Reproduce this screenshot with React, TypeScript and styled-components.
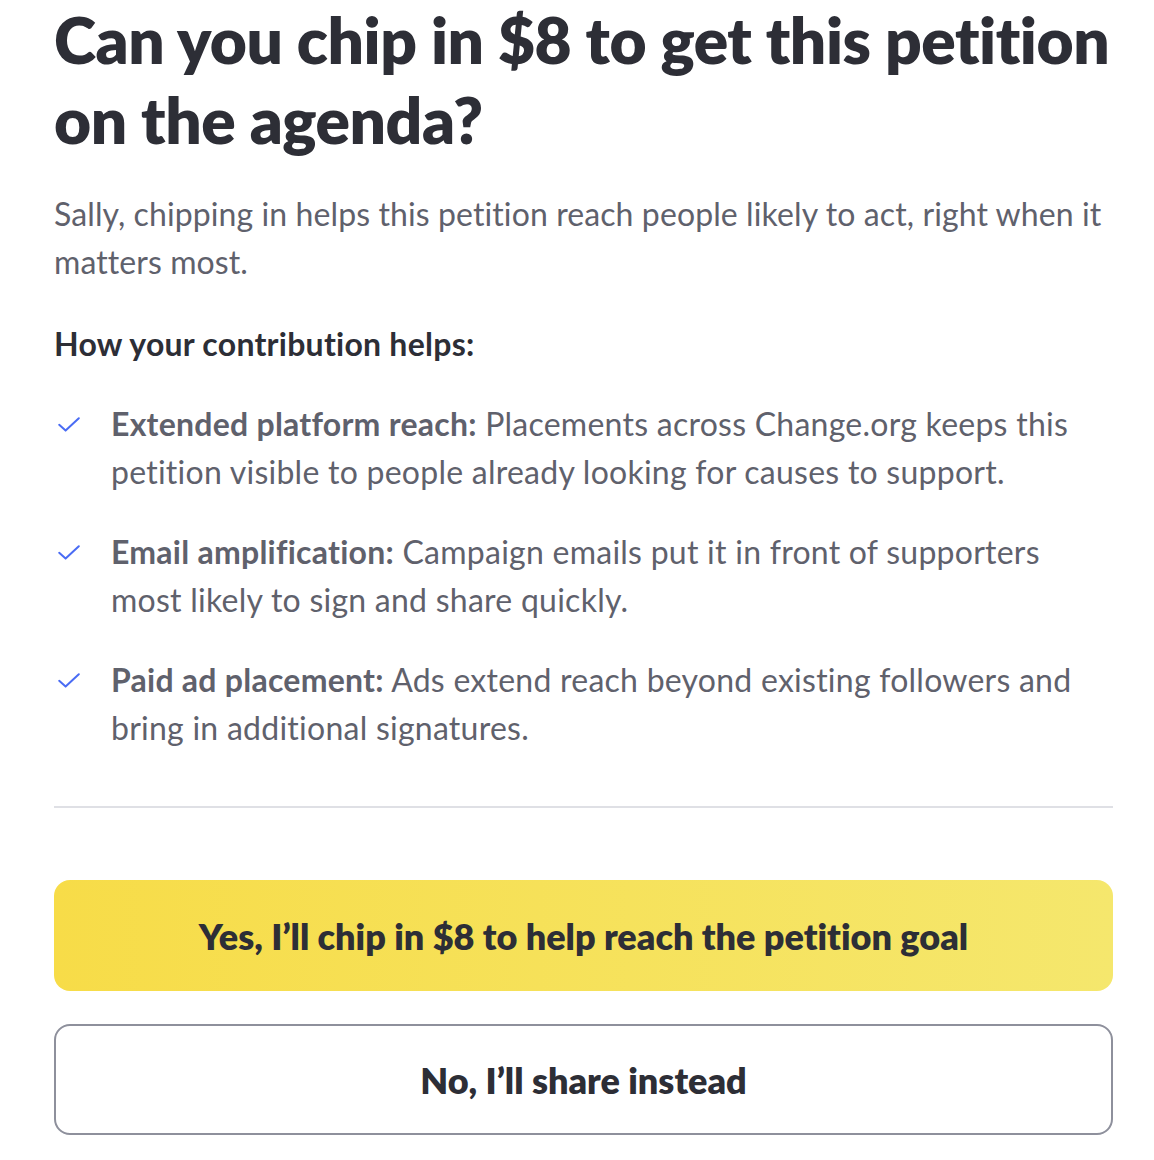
import React from "react";
import styled, { createGlobalStyle } from "styled-components";

const GlobalStyle = createGlobalStyle`
  html, body {
    margin: 0;
    padding: 0;
    background: #ffffff;
  }
  body {
    font-family: Lato, "Open Sans", sans-serif;
    font-variant-ligatures: none;
    -webkit-font-smoothing: antialiased;
  }
`;

const Page = styled.div`
  width: 1059px;
  padding: 0 41px 0 54px;
  display: flex;
  flex-direction: column;
`;

const Heading = styled.h1`
  margin: 0;
  font-size: 64px;
  line-height: 80px;
  font-weight: 800;
  color: #2d2e36;
  letter-spacing: -0.45px;
`;

const Intro = styled.p`
  margin: 30px 0 0;
  font-size: 32px;
  line-height: 48px;
  letter-spacing: 0.1px;
  color: #5f616c;
`;

const SubHeading = styled.h2`
  margin: 34px 0 0;
  font-size: 32px;
  line-height: 48px;
  letter-spacing: 0.25px;
  font-weight: 700;
  color: #2d2e36;
`;

const List = styled.ul`
  list-style: none;
  margin: 32px 0 0;
  padding: 0;
  display: flex;
  flex-direction: column;
  gap: 32px;
`;

const Item = styled.li`
  display: flex;
  align-items: flex-start;
  gap: 31px;
  font-size: 32px;
  line-height: 48px;
  letter-spacing: 0.25px;
  color: #5f616c;
`;

const CheckBox = styled.span`
  flex: 0 0 26px;
  height: 48px;
  display: flex;
  align-items: center;
  justify-content: flex-end;
`;

const Strong = styled.strong`
  font-weight: 700;
`;

const Divider = styled.hr`
  margin: 54px 0 0;
  border: none;
  height: 2px;
  background: #dfe0e5;
`;

const Actions = styled.div`
  margin-top: 72px;
  display: flex;
  flex-direction: column;
  gap: 33px;
`;

const ActionButton = styled.button<{ $primary?: boolean }>`
  height: 111px;
  border-radius: 16px;
  font-family: Lato, "Open Sans", sans-serif;
  font-variant-ligatures: none;
  font-size: 36px;
  font-weight: 800;
  color: #2d2e36;
  cursor: pointer;
  background: ${(p) =>
    p.$primary ? "linear-gradient(90deg, #f7dc48 0%, #f5e76d 100%)" : "#ffffff"};
  border: ${(p) => (p.$primary ? "none" : "2px solid #8e909c")};
  padding: 0 24px;
`;

const Check = () => (
  <svg width="22" height="15" viewBox="0 0 22 15" fill="none">
    <path
      d="M1.2 7.8 L7.6 13.6 L20.8 1.2"
      stroke="#4a6cf4"
      strokeWidth="2"
      strokeLinecap="round"
      strokeLinejoin="round"
    />
  </svg>
);

const points = [
  {
    title: "Extended platform reach:",
    text: "Placements across Change.org keeps this petition visible to people already looking for causes to support.",
  },
  {
    title: "Email amplification:",
    text: "Campaign emails put it in front of supporters most likely to sign and share quickly.",
  },
  {
    title: "Paid ad placement:",
    text: "Ads extend reach beyond existing followers and bring in additional signatures.",
  },
];

export default function App() {
  return (
    <>
      <GlobalStyle />
      <Page>
        <Heading>Can you chip in $8 to get this petition on the agenda?</Heading>
        <Intro>
          Sally, chipping in helps this petition reach people likely to act,
          right when it matters most.
        </Intro>
        <SubHeading>How your contribution helps:</SubHeading>
        <List>
          {points.map((p) => (
            <Item key={p.title}>
              <CheckBox>
                <Check />
              </CheckBox>
              <div>
                <Strong>{p.title}</Strong> {p.text}
              </div>
            </Item>
          ))}
        </List>
        <Divider />
        <Actions>
          <ActionButton $primary>Yes, I’ll chip in $8 to help reach the petition goal</ActionButton>
          <ActionButton>No, I’ll share instead</ActionButton>
        </Actions>
      </Page>
    </>
  );
}
